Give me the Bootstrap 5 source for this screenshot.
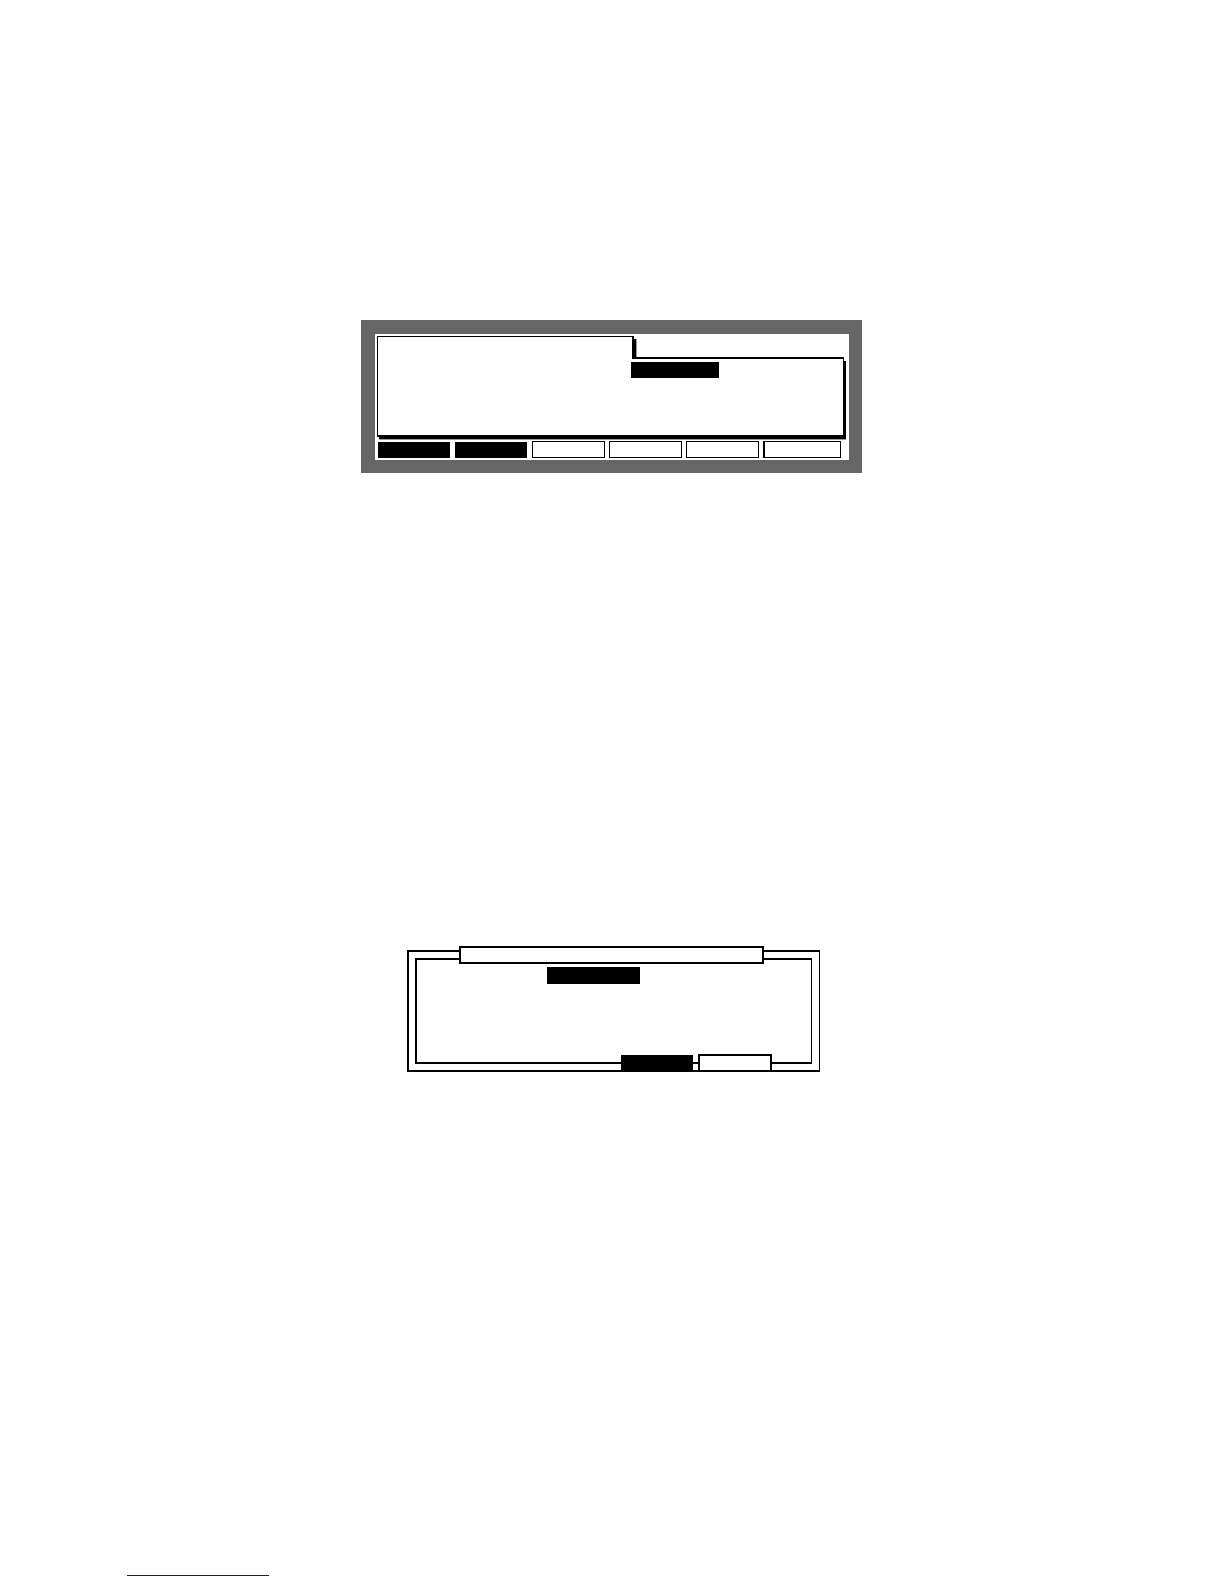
<!DOCTYPE html>
<html lang="en">
<head>
<meta charset="utf-8">
<meta name="viewport" content="width=device-width, initial-scale=1">
<title>LCD screens</title>
<link rel="stylesheet" href="https://cdn.jsdelivr.net/npm/bootstrap@5.3.0/dist/css/bootstrap.min.css">
<style>
  body { background: #fff; font-family: "Liberation Sans", sans-serif; }
  .figures { width: 100%; max-width: 502px; padding-top: 320px; }

  /* LCD with tabbed window and soft keys */
  .lcd { max-width: 501px; padding: 14px 13px 13px 14px; background: #666; }
  .lcd-screen { padding: 2px 5px 2px 2px; background: #fff; }
  .win-tab {
    width: 257px; height: 23px; background: #fff;
    border: solid #000; border-width: 1px 2px 0 1px;
    box-shadow: 2px 3px #000, 3px 3px #999;
  }
  .win-edge { border-bottom: 2px solid #000; }
  /* positioned so that it paints over the lower part of the tab's shadow */
  .win-body {
    position: relative;
    height: 78px; padding: 3px 0 0 253px; background: #fff;
    border: solid #000; border-width: 0 1px 2px 1px;
    box-shadow: 2px 2px #000, 2px 3px #999;
  }
  .field { display: block; padding: 0; border: 0; border-radius: 0; background: #000; color: #fff; font-size: 12px; }
  .lcd .field { width: 88px; height: 16px; }
  .softkeys { gap: 4px; padding: 4px 3px 0 1px; }
  .softkey { width: 73px; height: 17px; padding: 0; border: 1px solid #000; background: #fff; }
  .softkey.on { border-color: #fff #fff #000 #000; background: #000; background-clip: padding-box; border-width: 1px 1px 0 0; }
  .softkey.wide { flex: 1 1 auto; border-left-width: 2px; }

  /* Double-framed dialog */
  .dialog-frame {
    max-width: 413px; margin: 477px 0 0 46px; padding: 6px 7px 6px 6px;
    border: solid #000; border-width: 2px 1px 2px 2px;
  }
  .dialog-inner { height: 106px; padding: 7px 0 0 130px; border: solid #000; border-width: 2px 1px 2px 2px; }
  .dialog-inner .field { width: 93px; height: 17px; }
  .dialog-title { top: -6px; left: 50px; width: 305px; height: 18px; border: 2px solid #000; background: #fff; }
  .dialog-keys { right: 47px; bottom: -2px; gap: 5px; }
  .dialog-key { width: 74px; height: 18px; padding: 0; border: 2px solid #000; background: #fff; }
  .dialog-key.on { width: 72px; height: 17px; background: #000; }

  .foot { padding: 0 0 8px 127px; }
  .foot-link { width: 142px; height: 16px; border-bottom: 1px solid #14148c; }
</style>
</head>
<body>
<div class="d-flex flex-column min-vh-100">
  <main class="figures mx-auto">
    <section class="lcd">
      <div class="lcd-screen">
        <div class="d-flex">
          <div class="win-tab"></div>
          <div class="win-edge flex-fill"></div>
        </div>
        <div class="win-body">
          <input class="field" type="text" aria-label="Selected field">
        </div>
        <div class="softkeys d-flex">
          <button class="softkey on" type="button" aria-label="F1"></button>
          <button class="softkey on" type="button" aria-label="F2"></button>
          <button class="softkey" type="button" aria-label="F3"></button>
          <button class="softkey" type="button" aria-label="F4"></button>
          <button class="softkey" type="button" aria-label="F5"></button>
          <button class="softkey wide" type="button" aria-label="F6"></button>
        </div>
      </div>
    </section>

    <section class="dialog-frame position-relative">
      <div class="dialog-title position-absolute"></div>
      <div class="dialog-inner">
        <input class="field" type="text" aria-label="Selected value">
      </div>
      <div class="dialog-keys position-absolute d-flex align-items-end">
        <button class="dialog-key on" type="button" aria-label="F4"></button>
        <button class="dialog-key" type="button" aria-label="F5"></button>
      </div>
    </section>
  </main>

  <footer class="foot mt-auto">
    <a class="foot-link d-block" href="#" aria-label="Website"></a>
  </footer>
</div>
<script src="https://cdn.jsdelivr.net/npm/bootstrap@5.3.0/dist/js/bootstrap.bundle.min.js"></script>
</body>
</html>
